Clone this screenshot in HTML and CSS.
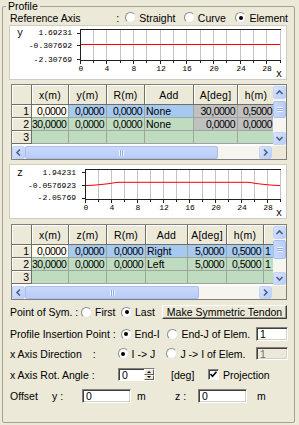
FILE: index.html
```html
<!DOCTYPE html>
<html>
<head>
<meta charset="utf-8">
<link rel="stylesheet" href="styles.css">
</head>
<body>
<fieldset class="group">
  <legend>Profile</legend>

  <div class="row ref-row">
    <span class="w-ref">Reference Axis</span><span class="w-colon">:</span>
    <span class="opt w-straight"><span class="radio"></span>Straight</span>
    <span class="opt w-curve"><span class="radio"></span>Curve</span>
    <span class="opt"><span class="radio on"></span>Element</span>
  </div>

  <div class="chart">
    <svg width="276" height="53" viewBox="0 0 276 53">
      <text x="7" y="10" class="axn">y</text>
      <text x="62" y="9" class="yl">1.69231</text>
      <text x="62" y="22" class="yl">-0.307692</text>
      <text x="62" y="36" class="yl">-2.30769</text>
      <g class="vg">
        <line x1="83.5" y1="3" x2="83.5" y2="34"/><line x1="96.5" y1="3" x2="96.5" y2="34"/>
        <line x1="110.5" y1="3" x2="110.5" y2="34"/><line x1="123.5" y1="3" x2="123.5" y2="34"/>
        <line x1="136.5" y1="3" x2="136.5" y2="34"/><line x1="150.5" y1="3" x2="150.5" y2="34"/>
        <line x1="163.5" y1="3" x2="163.5" y2="34"/><line x1="176.5" y1="3" x2="176.5" y2="34"/>
        <line x1="190.5" y1="3" x2="190.5" y2="34"/><line x1="203.5" y1="3" x2="203.5" y2="34"/>
        <line x1="216.5" y1="3" x2="216.5" y2="34"/><line x1="230.5" y1="3" x2="230.5" y2="34"/>
        <line x1="243.5" y1="3" x2="243.5" y2="34"/><line x1="256.5" y1="3" x2="256.5" y2="34"/>
        <line x1="270.5" y1="3" x2="270.5" y2="34"/>
      </g>
      <g class="ax">
        <line x1="70" y1="3.5" x2="271" y2="3.5"/>
        <line x1="70.5" y1="3" x2="70.5" y2="35"/>
        <line x1="70" y1="34.5" x2="271" y2="34.5"/>
        <line x1="67" y1="7.5" x2="70" y2="7.5"/><line x1="67" y1="19.5" x2="70" y2="19.5"/><line x1="67" y1="33.5" x2="70" y2="33.5"/>
        <line x1="70.5" y1="35" x2="70.5" y2="38"/><line x1="83.5" y1="35" x2="83.5" y2="37"/>
        <line x1="96.5" y1="35" x2="96.5" y2="38"/><line x1="110.5" y1="35" x2="110.5" y2="37"/>
        <line x1="123.5" y1="35" x2="123.5" y2="38"/><line x1="136.5" y1="35" x2="136.5" y2="37"/>
        <line x1="150.5" y1="35" x2="150.5" y2="38"/><line x1="163.5" y1="35" x2="163.5" y2="37"/>
        <line x1="176.5" y1="35" x2="176.5" y2="38"/><line x1="190.5" y1="35" x2="190.5" y2="37"/>
        <line x1="203.5" y1="35" x2="203.5" y2="38"/><line x1="216.5" y1="35" x2="216.5" y2="37"/>
        <line x1="230.5" y1="35" x2="230.5" y2="38"/><line x1="243.5" y1="35" x2="243.5" y2="37"/>
        <line x1="256.5" y1="35" x2="256.5" y2="38"/><line x1="270.5" y1="35" x2="270.5" y2="37"/>
      </g>
      <line class="red" x1="71" y1="18.5" x2="270" y2="18.5"/>
      <text x="71" y="45" class="xl">0</text><text x="97" y="45" class="xl">4</text>
      <text x="124" y="45" class="xl">8</text><text x="151" y="45" class="xl">12</text>
      <text x="177" y="45" class="xl">16</text><text x="204" y="45" class="xl">20</text>
      <text x="231" y="45" class="xl">24</text><text x="257" y="45" class="xl">28</text>
      <text x="266" y="51" class="axn">x</text>
    </svg>
  </div>

  <div class="grid">
    <div class="grid-main">
      <div class="cells">
        <table class="t1">
          <colgroup><col class="c20"><col class="c37"><col class="c38"><col class="c38"><col class="c49"><col class="c44"><col class="c37"></colgroup>
          <tr class="hd"><td></td><td>x(m)</td><td>y(m)</td><td>R(m)</td><td>Add</td><td>A[deg]</td><td>h(m)</td></tr>
          <tr class="sel"><td class="rh">1</td><td class="num cur">0,0000</td><td class="num">0,0000</td><td class="num">0,0000</td><td class="txt">None</td><td class="num ro">30,0000</td><td class="num ro">0,5000</td></tr>
          <tr class="gr"><td class="rh">2</td><td class="num">30,0000</td><td class="num">0,0000</td><td class="num">0,0000</td><td class="txt">None</td><td class="num ro">0,0000</td><td class="num ro">0,0000</td></tr>
          <tr class="gr"><td class="rh">3</td><td></td><td></td><td></td><td></td><td></td><td></td></tr>
        </table>
      </div>
      <div class="vscroll">
        <div class="sbtn"><svg width="11" height="11" viewBox="0 0 11 11"><path d="M2.5 7 L5.5 4 L8.5 7"/></svg></div>
        <div class="vthumb th1"><span class="grip-h"></span></div>
        <div class="track"></div>
        <div class="sbtn"><svg width="11" height="11" viewBox="0 0 11 11"><path d="M2.5 4 L5.5 7 L8.5 4"/></svg></div>
      </div>
    </div>
    <div class="grid-foot">
      <div class="hscroll">
        <div class="sbtn"><svg width="11" height="11" viewBox="0 0 11 11"><path d="M7 2.5 L4 5.5 L7 8.5"/></svg></div>
        <div class="hthumb hw1"><span class="grip-v"></span></div>
        <div class="track"></div>
        <div class="sbtn"><svg width="11" height="11" viewBox="0 0 11 11"><path d="M4 2.5 L7 5.5 L4 8.5"/></svg></div>
      </div>
      <div class="corner"></div>
    </div>
  </div>

  <div class="chart chart2">
    <svg width="276" height="53" viewBox="0 0 276 53">
      <text x="7" y="11" class="axn">z</text>
      <text x="66" y="10" class="yl">1.94231</text>
      <text x="66" y="23" class="yl">-0.0576923</text>
      <text x="66" y="35" class="yl">-2.05769</text>
      <g class="vg">
        <line x1="88.5" y1="4" x2="88.5" y2="34"/><line x1="101.5" y1="4" x2="101.5" y2="34"/>
        <line x1="114.5" y1="4" x2="114.5" y2="34"/><line x1="127.5" y1="4" x2="127.5" y2="34"/>
        <line x1="140.5" y1="4" x2="140.5" y2="34"/><line x1="153.5" y1="4" x2="153.5" y2="34"/>
        <line x1="166.5" y1="4" x2="166.5" y2="34"/><line x1="179.5" y1="4" x2="179.5" y2="34"/>
        <line x1="192.5" y1="4" x2="192.5" y2="34"/><line x1="205.5" y1="4" x2="205.5" y2="34"/>
        <line x1="218.5" y1="4" x2="218.5" y2="34"/><line x1="231.5" y1="4" x2="231.5" y2="34"/>
        <line x1="244.5" y1="4" x2="244.5" y2="34"/><line x1="257.5" y1="4" x2="257.5" y2="34"/>
        <line x1="270.5" y1="4" x2="270.5" y2="34"/>
      </g>
      <g class="ax">
        <line x1="75" y1="4.5" x2="271" y2="4.5"/>
        <line x1="75.5" y1="4" x2="75.5" y2="35"/>
        <line x1="75" y1="34.5" x2="271" y2="34.5"/>
        <line x1="72" y1="7.5" x2="75" y2="7.5"/><line x1="72" y1="20.5" x2="75" y2="20.5"/><line x1="72" y1="33.5" x2="75" y2="33.5"/>
        <line x1="75.5" y1="35" x2="75.5" y2="38"/><line x1="88.5" y1="35" x2="88.5" y2="37"/>
        <line x1="101.5" y1="35" x2="101.5" y2="38"/><line x1="114.5" y1="35" x2="114.5" y2="37"/>
        <line x1="127.5" y1="35" x2="127.5" y2="38"/><line x1="140.5" y1="35" x2="140.5" y2="37"/>
        <line x1="153.5" y1="35" x2="153.5" y2="38"/><line x1="166.5" y1="35" x2="166.5" y2="37"/>
        <line x1="179.5" y1="35" x2="179.5" y2="38"/><line x1="192.5" y1="35" x2="192.5" y2="37"/>
        <line x1="205.5" y1="35" x2="205.5" y2="38"/><line x1="218.5" y1="35" x2="218.5" y2="37"/>
        <line x1="231.5" y1="35" x2="231.5" y2="38"/><line x1="244.5" y1="35" x2="244.5" y2="37"/>
        <line x1="257.5" y1="35" x2="257.5" y2="38"/><line x1="270.5" y1="35" x2="270.5" y2="37"/>
      </g>
      <polyline class="red" points="76,20.5 82,20.3 88,19.8 94,19.2 100,18.5 104,17.8 108,17.3 238,17.3 242,17.8 246,18.5 252,19.2 258,19.8 264,20.3 270,20.5"/>
      <text x="76" y="45" class="xl">0</text><text x="102" y="45" class="xl">4</text>
      <text x="128" y="45" class="xl">8</text><text x="154" y="45" class="xl">12</text>
      <text x="180" y="45" class="xl">16</text><text x="206" y="45" class="xl">20</text>
      <text x="232" y="45" class="xl">24</text><text x="258" y="45" class="xl">28</text>
      <text x="266" y="51" class="axn">x</text>
    </svg>
  </div>

  <div class="grid grid2">
    <div class="grid-main">
      <div class="cells">
        <table class="t2">
          <colgroup><col class="c20"><col class="c37"><col class="c38"><col class="c39"><col class="c42"><col class="c39"><col class="c37"><col class="c40"></colgroup>
          <tr class="hd"><td></td><td>x(m)</td><td>z(m)</td><td>R(m)</td><td>Add</td><td>A[deg]</td><td>h(m)</td><td></td></tr>
          <tr class="sel"><td class="rh">1</td><td class="num cur">0,0000</td><td class="num">0,0000</td><td class="num">0,0000</td><td class="txt">Right</td><td class="num">5,0000</td><td class="num">0,5000</td><td class="txt">1</td></tr>
          <tr class="gr"><td class="rh">2</td><td class="num">30,0000</td><td class="num">0,0000</td><td class="num">0,0000</td><td class="txt">Left</td><td class="num">5,0000</td><td class="num">0,5000</td><td class="txt">1</td></tr>
          <tr class="gr"><td class="rh">3</td><td></td><td></td><td></td><td></td><td></td><td></td><td></td></tr>
        </table>
      </div>
      <div class="vscroll">
        <div class="sbtn"><svg width="11" height="11" viewBox="0 0 11 11"><path d="M2.5 7 L5.5 4 L8.5 7"/></svg></div>
        <div class="vthumb th2"><span class="grip-h"></span></div>
        <div class="track"></div>
        <div class="sbtn"><svg width="11" height="11" viewBox="0 0 11 11"><path d="M2.5 4 L5.5 7 L8.5 4"/></svg></div>
      </div>
    </div>
    <div class="grid-foot">
      <div class="hscroll">
        <div class="sbtn"><svg width="11" height="11" viewBox="0 0 11 11"><path d="M7 2.5 L4 5.5 L7 8.5"/></svg></div>
        <div class="hthumb hw2"><span class="grip-v"></span></div>
        <div class="track"></div>
        <div class="sbtn"><svg width="11" height="11" viewBox="0 0 11 11"><path d="M4 2.5 L7 5.5 L4 8.5"/></svg></div>
      </div>
      <div class="corner"></div>
    </div>
  </div>

  <div class="row sym-row">
    <span class="w-sym">Point of Sym. :</span>
    <span class="opt w-first"><span class="radio"></span>First</span>
    <span class="opt w-last"><span class="radio on"></span>Last</span>
    <span class="btn">Make Symmetric Tendon</span>
  </div>

  <div class="row ins-row">
    <span class="w-ins">Profile Insertion Point :</span>
    <span class="opt w-endi"><span class="radio on"></span>End-I</span>
    <span class="opt w-endj"><span class="radio"></span>End-J of Elem.</span>
    <span class="tb tb-elem">1</span>
  </div>

  <div class="row dir-row">
    <span class="w-dir">x Axis Direction</span><span class="w-dcolon">:</span>
    <span class="opt w-ij"><span class="radio on"></span>I -&gt; J</span>
    <span class="opt w-ji"><span class="radio"></span>J -&gt; I of Elem.</span>
    <span class="tb tb-elem dis">1</span>
  </div>

  <div class="row rot-row">
    <span class="w-rot">x Axis Rot. Angle :</span>
    <span class="spin"><span class="spin-val">0</span><span class="spin-btns"><span class="sbt up"></span><span class="sbt dn"></span></span></span>
    <span class="w-deg">[deg]</span>
    <span class="opt"><span class="chk"><svg width="9" height="9" viewBox="0 0 9 9"><path d="M1.5 4 L3.5 6.2 L7.5 1.8"/></svg></span>Projection</span>
  </div>

  <div class="row off-row">
    <span class="w-off">Offset</span>
    <span class="w-y">y :</span>
    <span class="tb tb-off">0</span>
    <span class="w-m1">m</span>
    <span class="w-z">z :</span>
    <span class="tb tb-off">0</span>
    <span class="w-m2">m</span>
  </div>
</fieldset>
</body>
</html>
```

FILE: styles.css
```css
* { box-sizing: border-box; }
html, body { margin: 0; padding: 0; }
body {
  width: 299px;
  height: 425px;
  overflow: hidden;
  background: #ece9d8;
  font-family: "Liberation Sans", Arial, sans-serif;
  font-size: 10.5px;
  color: #000;
}

.group {
  margin: 0 0 0 2px;
  width: 293px;
  height: 423px;
  padding: 0 6px;
  border: 1px solid #a5a291;
  border-radius: 2px;
  min-width: 0;
}
.group > legend {
  margin-left: -3px;
  padding: 0 2px;
  line-height: 12px;
  font-size: 10.5px;
}

.row {
  display: flex;
  align-items: center;
  padding-left: 1px;
  white-space: nowrap;
}
.opt { display: inline-flex; align-items: center; }
.radio {
  width: 11px;
  height: 11px;
  border-radius: 50%;
  background: #fff;
  border: 1px solid;
  border-color: #8c8c8c #e4e4e4 #e4e4e4 #8c8c8c;
  margin-right: 3px;
  display: inline-flex;
  align-items: center;
  justify-content: center;
  flex: none;
}
.radio.on::after {
  content: "";
  width: 4px;
  height: 4px;
  border-radius: 50%;
  background: #000;
}

/* reference axis row */
.ref-row { height: 11px; margin-bottom: 2px; }
.w-ref { width: 107px; }
.w-colon { width: 9px; }
.w-straight { width: 59px; }
.w-curve { width: 52px; }

/* charts */
.chart {
  width: 278px;
  height: 55px;
  background: #fff;
  border: 1px solid #cfcdc2;
}
.chart svg { display: block; }
.chart2 { margin-top: 4px; }
.axn { font-family: "Liberation Mono", monospace; font-size: 10px; fill: #000; }
.yl { font-family: "Liberation Mono", monospace; font-size: 8px; text-anchor: end; fill: #000; }
.xl { font-family: "Liberation Mono", monospace; font-size: 8px; text-anchor: middle; fill: #000; }
.vg line { stroke: #c4c4c4; stroke-width: 1; }
.ax line { stroke: #202020; stroke-width: 1; }
.red { stroke: #ff0000; stroke-width: 1; fill: none; }

/* grids */
.grid {
  margin: 4px 0 0 2px;
  width: 276px;
  height: 76px;
  border: 1px solid #7f7f7f;
  display: flex;
  flex-direction: column;
  background: #ece9d8;
}
.grid2 { margin-top: 5px; }
.grid-main { display: flex; height: 61px; }
.cells { width: 261px; height: 61px; overflow: hidden; background: #fff; }
.cells table {
  border-collapse: separate;
  border-spacing: 0;
  table-layout: fixed;
  font-size: 10.5px;
}
.t1 { width: 263px; }
.t2 { width: 292px; }
col.c20 { width: 20px; }
col.c37 { width: 37px; }
col.c38 { width: 38px; }
col.c39 { width: 39px; }
col.c40 { width: 40px; }
col.c42 { width: 42px; }
col.c44 { width: 44px; }
col.c49 { width: 49px; }
.cells td {
  padding: 0;
  height: 13px;
  line-height: 12px;
  border-right: 1px solid #9ea49e;
  border-bottom: 1px solid #9ea49e;
  white-space: nowrap;
  overflow: hidden;
}
.cells tr.hd td {
  height: 20px;
  text-align: center;
  background: #ece9d8;
  border-right: 1px solid #716f64;
  border-bottom: 1px solid #716f64;
  box-shadow: inset 1px 1px 0 #fff;
  letter-spacing: 0.2px;
}
.cells td.rh {
  background: #ece9d8;
  text-align: right;
  padding-right: 2px;
  border-right: 1px solid #716f64;
  border-bottom: 1px solid #716f64;
  box-shadow: inset 1px 1px 0 #fff;
}
.cells tr.sel td { background: #a6c9f0; }
.cells tr.gr td { background: #c0dcc0; }
.cells tr.sel td.rh, .cells tr.gr td.rh { background: #ece9d8; }
.cells tr td.cur { background: #fffbf0; }
.cells tr td.ro { background: #c0c0c0; }
.num { text-align: right; padding-right: 2px !important; letter-spacing: -0.5px; }
.txt { text-align: left; padding-left: 1px !important; }

/* scrollbars */
.vscroll {
  width: 13px;
  height: 61px;
  display: flex;
  flex-direction: column;
  padding: 1px 0;
  background: #f6f5f0;
}
.sbtn {
  width: 13px;
  height: 13px;
  flex: none;
  background: linear-gradient(135deg, #d9e4fd, #b8cdf8);
  border: 1px solid #c3d3f6;
  border-radius: 2px;
  display: flex;
  align-items: center;
  justify-content: center;
}
.sbtn svg path { stroke: #4d6185; stroke-width: 1.6; fill: none; }
.vthumb, .hthumb {
  flex: none;
  background: linear-gradient(90deg, #c9d8fc, #b9cdf8);
  border: 1px solid #a9c0ef;
  border-radius: 2px;
  display: flex;
  align-items: center;
  justify-content: center;
}
.th1 { margin-top: 2px; height: 17px; }
.th2 { margin-top: 1px; height: 19px; }
.track { flex: 1; }
.grip-h {
  width: 6px;
  height: 5px;
  background: repeating-linear-gradient(180deg, #eef3fe 0 1px, #8fa9e4 1px 2px);
}
.grip-v {
  width: 5px;
  height: 6px;
  background: repeating-linear-gradient(90deg, #eef3fe 0 1px, #8fa9e4 1px 2px);
}
.grid-foot { display: flex; height: 13px; }
.hscroll {
  width: 260px;
  height: 13px;
  display: flex;
  background: #f6f5f0;
}
.hscroll .hthumb { height: 13px; background: linear-gradient(180deg, #c9d8fc, #b9cdf8); }
.hw1 { width: 193px; }
.hw2 { width: 174px; }
.corner { width: 14px; height: 13px; background: #ece9d8; }

/* lower controls */
.sym-row { height: 14px; margin-top: 5px; }
.w-sym { width: 70px; }
.w-first { width: 41px; padding-left: 1px; }
.w-last { width: 40px; }
.btn {
  margin-left: 1px;
  width: 125px;
  height: 14px;
  display: flex;
  align-items: center;
  justify-content: center;
  background: #ece9d8;
  border: 1px solid;
  border-color: #fff #404040 #404040 #fff;
  box-shadow: inset -1px -1px 0 #9d9a8a;
}

.ins-row { height: 14px; margin-top: 8px; }
.w-ins { width: 111px; }
.w-endi { width: 47px; }
.w-endj { width: 89px; }

.tb {
  display: flex;
  align-items: center;
  padding-left: 3px;
  background: #fff;
  border: 1px solid;
  border-color: #808080 #fff #fff #808080;
  box-shadow: inset 1px 1px 0 #404040, inset -1px -1px 0 #d4d0c8;
}
.tb-elem { width: 32px; height: 14px; }
.tb.dis { background: #ece9d8; color: #6e6e6e; height: 13px; }

.dir-row { height: 13px; margin-top: 6px; }
.w-dir { width: 83px; }
.w-dcolon { width: 25px; }
.w-ij { width: 49px; }
.w-ji { width: 90px; }

.rot-row { height: 13px; margin-top: 8px; }
.w-rot { width: 108px; }
.spin {
  width: 37px;
  height: 13px;
  display: flex;
  background: #fff;
  border: 1px solid;
  border-color: #808080 #fff #fff #808080;
  box-shadow: inset 1px 1px 0 #404040;
}
.spin-val { flex: 1; padding-left: 3px; display: flex; align-items: center; }
.spin-btns { width: 10px; display: flex; flex-direction: column; }
.sbt {
  flex: 1;
  background: #ece9d8;
  border: 1px solid;
  border-color: #fff #606060 #606060 #fff;
  display: flex;
  align-items: center;
  justify-content: center;
}
.sbt.up::after {
  content: "";
  border-left: 2px solid transparent;
  border-right: 2px solid transparent;
  border-bottom: 2px solid #000;
}
.sbt.dn::after {
  content: "";
  border-left: 2px solid transparent;
  border-right: 2px solid transparent;
  border-top: 2px solid #000;
}
.w-deg { width: 37px; margin-left: 16px; }
.chk {
  width: 11px;
  height: 11px;
  margin-right: 4px;
  background: #fff;
  border: 1px solid;
  border-color: #808080 #fff #fff #808080;
  box-shadow: inset 1px 1px 0 #404040;
  display: flex;
  align-items: center;
  justify-content: center;
}
.chk svg path { stroke: #000; stroke-width: 1.6; fill: none; }

.off-row { height: 14px; margin-top: 8px; }
.w-off { width: 42px; }
.w-y { width: 30px; }
.tb-off { width: 49px; height: 14px; }
.w-m1 { width: 38px; margin-left: 6px; }
.w-z { width: 23px; }
.w-m2 { margin-left: 10px; }
```
